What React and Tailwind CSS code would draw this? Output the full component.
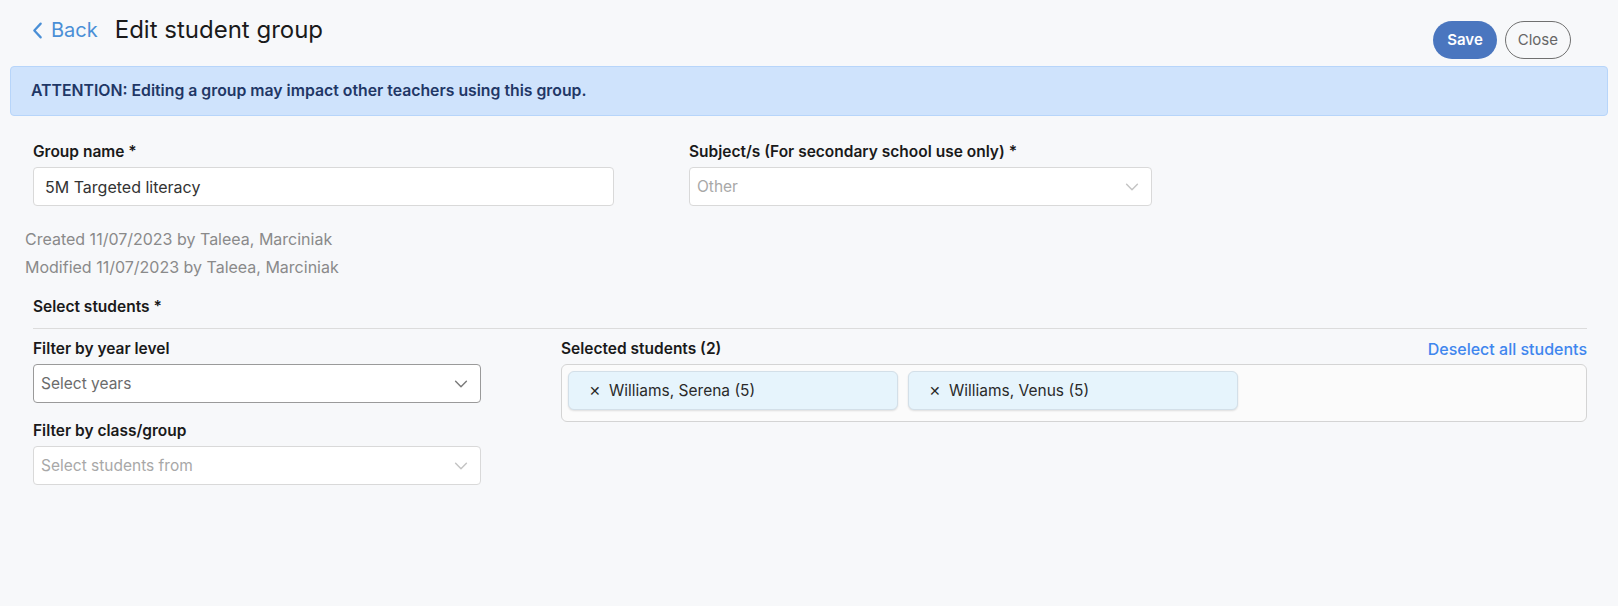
import React from 'react';

const Chevron = ({ className }) => (
  <svg viewBox="0 0 20 20" className={className} fill="none" stroke="currentColor" strokeWidth="1.6" strokeLinecap="round" strokeLinejoin="round">
    <path d="M4 7l6 6 6-6" />
  </svg>
);

const SelectBox = ({ placeholder, width, disabled }) => (
  <div
    className={`flex items-center justify-between h-[39px] rounded-[4px] bg-white px-[7px] ${width} ${
      disabled ? 'border border-[#d9d9d9] text-[#a8a8a8]' : 'border border-[#9a9a9a] text-[#6b6b6b]'
    }`}
  >
    <span className="text-[15.5px]">{placeholder}</span>
    <Chevron className={`w-[18px] h-[18px] mr-[3px] ${disabled ? 'text-[#c4c4c4]' : 'text-[#7a7a7a]'}`} />
  </div>
);

const Chip = ({ name }) => (
  <div className="flex items-center w-[330px] h-[39px] rounded-[6px] bg-[#e6f4fc] border border-[#d3dfe8] shadow-[0_1px_2px_rgba(0,0,0,0.12)] pl-[20px] text-[15.5px] text-[#2a2a2a]">
    <span className="mr-[8px] text-[14px]">✕</span>
    {name}
  </div>
);

export default function App() {
  return (
    <div className="min-h-[606px] bg-[#f7f8fa] px-[10px] font-['Inter',sans-serif]">
      <div className="flex items-start justify-between">
        <div className="flex items-center pt-[12px] pl-[22px]">
          <svg viewBox="0 0 12 20" className="w-[11px] h-[19px] text-[#4a8fd6]" fill="none" stroke="currentColor" strokeWidth="2.4" strokeLinecap="round" strokeLinejoin="round">
            <path d="M9.5 2.5L2.5 10l7 7.5" />
          </svg>
          <span className="ml-[8px] text-[20px] text-[#4a8fd6]">Back</span>
          <h1 className="ml-[17px] text-[24px] text-[#1a1a1a]">Edit student group</h1>
        </div>
        <div className="flex items-center gap-[8px] mt-[21px] mr-[37px]">
          <button className="h-[38px] px-[14px] rounded-full bg-[#4a76bf] text-white text-[15px] font-semibold">Save</button>
          <button className="h-[38px] px-[12px] rounded-full border border-[#707070] text-[#666] text-[15px]">Close</button>
        </div>
      </div>

      <div className="mt-[7px] h-[50px] flex items-center rounded-[4px] border border-[#b7d5fa] bg-[#cfe3fc] px-[20px] text-[15.8px] font-semibold text-[#1f3766]">
        ATTENTION: Editing a group may impact other teachers using this group.
      </div>

      <div className="flex gap-[75px] pl-[23px] mt-[25px]">
        <div>
          <label className="block text-[15.5px] font-semibold text-[#1a1a1a] leading-[22px]">Group name *</label>
          <div className="mt-[4px] w-[581px] h-[39px] flex items-center rounded-[4px] border border-[#d9d9d9] bg-white px-[11px] text-[16px] text-[#333]">
            5M Targeted literacy
          </div>
        </div>
        <div>
          <label className="block text-[15.5px] font-semibold text-[#1a1a1a] leading-[22px]">Subject/s (For secondary school use only) *</label>
          <div className="mt-[4px]">
            <SelectBox placeholder="Other" width="w-[463px]" disabled />
          </div>
        </div>
      </div>

      <div className="pl-[15px] mt-[19px] text-[16px] text-[#8a8a8a] leading-[28px]">
        <div>Created 11/07/2023 by Taleea, Marciniak</div>
        <div>Modified 11/07/2023 by Taleea, Marciniak</div>
      </div>

      <div className="ml-[23px] mr-[21px]">
        <div className="mt-[15px] text-[15.5px] font-semibold text-[#1a1a1a] leading-[22px] pb-[10px] border-b border-[#dcdcdc]">
          Select students *
        </div>

        <div className="flex gap-[80px] mt-[9px]">
          <div className="w-[448px] shrink-0">
            <label className="block text-[15.5px] font-semibold text-[#1a1a1a] leading-[22px]">Filter by year level</label>
            <div className="mt-[4px]">
              <SelectBox placeholder="Select years" width="w-[448px]" />
            </div>
            <label className="block mt-[17px] text-[15.5px] font-semibold text-[#1a1a1a] leading-[22px]">Filter by class/group</label>
            <div className="mt-[4px]">
              <SelectBox placeholder="Select students from" width="w-[448px]" disabled />
            </div>
          </div>

          <div className="flex-1">
            <div className="flex items-center justify-between leading-[22px]">
              <span className="text-[15.5px] font-semibold text-[#1a1a1a]">Selected students (2)</span>
              <span className="text-[16px] font-medium text-[#3f86ee]">Deselect all students</span>
            </div>
            <div className="mt-[4px] h-[58px] flex items-start gap-[10px] rounded-[6px] border border-[#d4d4d4] bg-[#fbfbfb] px-[6px] pt-[6px]">
              <Chip name="Williams, Serena (5)" />
              <Chip name="Williams, Venus (5)" />
            </div>
          </div>
        </div>
      </div>
    </div>
  );
}
